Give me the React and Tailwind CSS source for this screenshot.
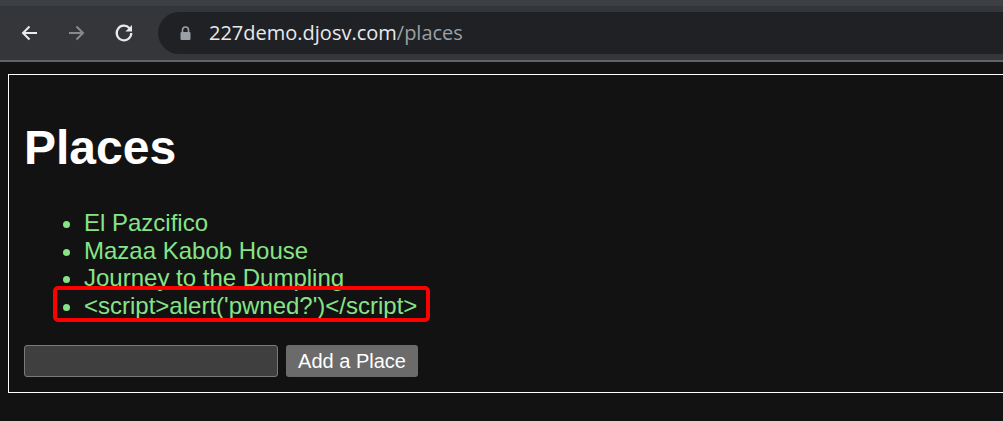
export default function App() {
  const places = ['El Pazcifico', 'Mazaa Kabob House', 'Journey to the Dumpling'];

  return (
    <div className="w-[1003px] h-[421px] overflow-hidden bg-[#121212]">
      {/* browser chrome */}
      <div className="h-[6px] bg-[#3c3f43]" />
      <div className="h-[54px] bg-[#35363a] flex items-center">
        <div className="w-[58px] flex justify-center pl-[2px]">
          <svg width="20" height="20" viewBox="0 0 20 20" fill="none" stroke="#e8eaed" strokeWidth="2">
            <path d="M17 10H3.5M9.5 3.5 3 10l6.5 6.5" />
          </svg>
        </div>
        <div className="w-[36px] flex justify-center">
          <svg width="20" height="20" viewBox="0 0 20 20" fill="none" stroke="#87898c" strokeWidth="2">
            <path d="M3 10h13.5M10.5 3.5 17 10l-6.5 6.5" />
          </svg>
        </div>
        <div className="w-[60px] flex justify-center">
          <svg width="22" height="22" viewBox="0 0 22 22" fill="none">
            <path d="M16.5 6.2A7.3 7.3 0 1 0 18.3 11" stroke="#e8eaed" strokeWidth="2.2" fill="none" />
            <path d="M19 3v6.6h-6.6z" fill="#e8eaed" />
          </svg>
        </div>
        <div className="ml-[4px] h-[42px] flex-1 rounded-l-full bg-[#202124] flex items-center pl-[22px]">
          <svg width="11" height="14" viewBox="0 0 11 14">
            <path d="M2.5 6V4a3 3 0 0 1 6 0v2" stroke="#9aa0a6" strokeWidth="1.6" fill="none" />
            <rect x="0.5" y="6" width="10" height="8" rx="1" fill="#9aa0a6" />
          </svg>
          <div className="ml-[18px] text-[20px] font-['Open_Sans',sans-serif] text-[#e8eaed]">
            227demo.djosv.com<span className="text-[#9aa0a6]">/places</span>
          </div>
        </div>
      </div>
      <div className="h-[2px] bg-[#5f6368]" />

      {/* page */}
      <div className="pt-[12px] pl-[8px]">
        <div className="w-[1100px] h-[319px] border border-white px-[15px] pt-[10px] font-['Liberation_Sans',Arial,sans-serif]">
          <h1 className="text-[48px] font-bold text-white leading-[55px] mt-[35px]">Places</h1>
          <ul className="mt-[34px] text-[24px] leading-[27.6px] text-[#86e486] list-disc pl-[60px] marker:text-[#86e486]">
            {places.map((p) => (
              <li key={p}>{p}</li>
            ))}
            <li className="relative">
              &lt;script&gt;alert('pwned?')&lt;/script&gt;
              <span className="absolute left-[-31px] top-[-6px] w-[377px] h-[36px] border-[4px] border-[#ff0000] rounded-[5px]" />
            </li>
          </ul>
          <form className="mt-[26px] flex items-center gap-[8px]" onSubmit={(e) => e.preventDefault()}>
            <input
              type="text"
              className="w-[254px] h-[32px] bg-[#3f3f3f] border border-[#7a7a7a] rounded-[3px] outline-none text-white px-2"
            />
            <button type="submit" className="w-[132px] h-[32px] bg-[#6b6b6b] rounded-[3px] text-white text-[20px]">
              Add a Place
            </button>
          </form>
        </div>
      </div>
    </div>
  );
}
